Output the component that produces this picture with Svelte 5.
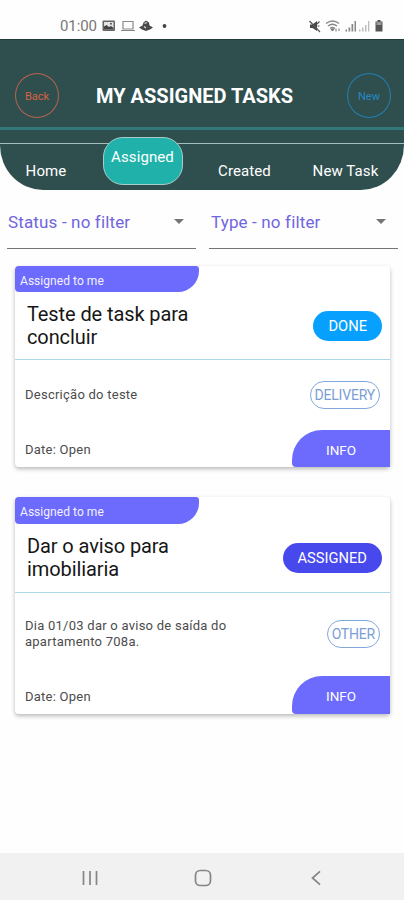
<script>
    const tabs = ['Home', 'Assigned', 'Created', 'New Task']
    const filters = ['Status - no filter', 'Type - no filter']
    const tasks = [
        {
            title: 'Teste de task para concluir',
            description: 'Descrição do teste',
            status: 'DONE',
            type: 'DELIVERY',
            date: 'Open'
        },
        {
            title: 'Dar o aviso para imobiliaria',
            description: 'Dia 01/03 dar o aviso de saída do apartamento 708a.',
            status: 'ASSIGNED',
            type: 'OTHER',
            date: 'Open'
        }
    ]
    let active = 'Assigned'
</script>

<div class="screen">
    <div class="status-bar">
        <span class="clock">01:00</span>
        <svg class="left-icons" width="66" height="14" viewBox="0 0 66 14">
            <rect x="0.5" y="1.500" width="12.500" height="10.500" rx="1" fill="#666" />
            <rect x="2" y="3" width="9.500" height="7.500" fill="#e4e4e4" />
            <path d="M2 10.5V7.500l2.500-1.500 2.500 2 2-1 2.500 2v1.500z" fill="#444" />
            <circle cx="9" cy="4.800" r="1" fill="#555" />
            <path d="M21 2.500h10v7.500h-10zM19 11.500h14" fill="none" stroke="#888" stroke-width="1.200" />
            <path d="M37 8.500l3.500-2 1-3 2.500-2 3 2 .5 3 3.500 2-3 2-4 1.500-4-1.500z" fill="#484848" />
            <path d="M42.500 4.500l2.500-1M42 7.500l2 1.500" stroke="#ddd" stroke-width="1.200" />
            <circle cx="62.500" cy="7" r="1.900" fill="#444" />
        </svg>
        <svg class="right-icons" width="78" height="14" viewBox="0 0 78 14">
            <path d="M2 5.500h2.500L9 2v10L4.500 9H2z" fill="#484848" />
            <path d="M1.500 2l10.500 11M9 5l2.500-2.500M9.500 7h2" stroke="#555" stroke-width="1.200" />
            <g fill="none" stroke="#888" stroke-width="1.400">
                <path d="M18 4.500q6.500-5 13 0" />
                <path d="M20 7q4.500-3.500 9 0" />
                <path d="M22 9.500q2.500-2 5 0" />
            </g>
            <path d="M23 10h3l-1.500 2zM28 9.500v3M31 9.500v2.500" fill="#666" stroke="#777" />
            <g fill="#888">
                <rect x="37.500" y="10.500" width="1.500" height="2" />
                <rect x="40.500" y="8.500" width="1.700" height="4" />
                <rect x="43.500" y="5" width="1.700" height="7.500" />
                <rect x="46.500" y="2" width="1.500" height="10.500" />
            </g>
            <g fill="#bbb">
                <rect x="51" y="10.500" width="1.500" height="2" />
                <rect x="54" y="8.500" width="1.500" height="4" />
                <rect x="57" y="6" width="1.500" height="6.500" />
                <rect x="60" y="2" width="1.300" height="10.500" />
            </g>
            <path d="M67.500 2.500h2V1h3v1.500h2v10h-7z" fill="#555" />
            <path d="M68.500 3h5v3h-5z" fill="#999" />
        </svg>
    </div>

    <header>
        <button class="round back">Back</button>
        <h1>MY ASSIGNED TASKS</h1>
        <button class="round new">New</button>
    </header>
    <div class="strip"></div>

    <nav>
        {#each tabs as tab}
            <button class="tab" class:active={tab === active} on:click={() => active = tab}>{tab}</button>
        {/each}
    </nav>

    <div class="filters">
        {#each filters as filter}
            <div class="filter">
                <span>{filter}</span>
                <svg width="10" height="5" viewBox="0 0 10 5"><path d="M0 0h10L5 5z" fill="#757575" /></svg>
            </div>
        {/each}
    </div>

    <main>
        {#each tasks as task}
            <article class={task.status.toLowerCase()}>
                <div class="label">Assigned to me</div>
                <div class="top">
                    <h2>{task.title}</h2>
                    <span class="badge">{task.status}</span>
                </div>
                <div class="body">
                    <p>{task.description}</p>
                    <span class="type">{task.type}</span>
                </div>
                <div class="bottom">
                    <span class="date">Date: {task.date}</span>
                    <button class="info">INFO</button>
                </div>
            </article>
        {/each}
    </main>

    <footer>
        <svg width="16" height="16" viewBox="0 0 16 16">
            <path d="M1.500 1v14M8 1v14M14.500 1v14" stroke="#858585" stroke-width="1.700" />
        </svg>
        <svg class="home" width="18" height="18" viewBox="0 0 18 18">
            <rect x="1.500" y="1.500" width="15" height="15" rx="4.800" fill="none" stroke="#858585" stroke-width="1.700" />
        </svg>
        <svg width="10" height="16" viewBox="0 0 10 16">
            <path d="M9 1.300L1.500 8 9 14.700" fill="none" stroke="#858585" stroke-width="1.700" />
        </svg>
    </footer>
</div>

<style>
    :global(body) {
        margin: 0;
        background: #fefefe;
    }

    .screen {
        display: flex;
        flex-direction: column;
        width: 404px;
        height: 900px;
        overflow: hidden;
        background: #fefefe;
        font-family: Roboto, "Liberation Sans", sans-serif;
    }

    button {
        padding: 0;
        border: none;
        background: none;
        font-family: inherit;
    }

    h1, h2, p {
        margin: 0;
        font-weight: 400;
    }

    .status-bar {
        display: flex;
        align-items: center;
        box-sizing: border-box;
        height: 39px;
        padding: 13px 18px 0 60px;
    }

    .clock {
        width: 42px;
        color: #777;
        font-size: 15px;
        letter-spacing: -0.1px;
    }

    .right-icons {
        margin-left: auto;
    }

    header {
        display: flex;
        align-items: center;
        box-sizing: border-box;
        height: 88px;
        padding: 24px 13px 0 15px;
        border-top: 1px solid #203c3b;
        background: #2f4f4f;
    }

    h1 {
        margin-left: 37px;
        color: #fff;
        font-size: 20px;
        font-weight: 700;
        white-space: nowrap;
    }

    .round {
        box-sizing: border-box;
        width: 44px;
        height: 45px;
        padding-top: 2px;
        border: 1.5px solid;
        border-radius: 50%;
        font-size: 11px;
    }

    .back {
        border-color: #b7634f;
        color: #d5613f;
    }

    .new {
        margin-left: auto;
        border-color: #247fb0;
        color: #2389c5;
    }

    .strip {
        height: 13px;
        border-top: 3px solid #32777a;
        background: #2f4f4f;
    }

    nav {
        display: grid;
        grid-template-columns: 92px 101px 103px 99px;
        box-sizing: border-box;
        height: 47px;
        flex-shrink: 0;
        border-top: 1px solid #a5bdbb;
        border-radius: 0 0 43px 43px / 0 0 45px 45px;
        background: #2f4f4f;
    }

    .tab {
        padding-top: 7px;
        color: #fff;
        font-size: 15px;
        letter-spacing: 0.1px;
        white-space: nowrap;
    }

    .tab.active {
        box-sizing: border-box;
        justify-self: center;
        width: 80px;
        height: 48px;
        margin-top: -7px;
        padding: 0 0 9px;
        border: 1px solid #a7cdca;
        border-radius: 20px;
        background: #20b2aa;
    }

    .filters {
        display: grid;
        grid-template-columns: 189px 189px;
        gap: 13px;
        height: 59px;
        padding-left: 7px;
    }

    .filter {
        display: flex;
        align-items: center;
        justify-content: space-between;
        box-sizing: border-box;
        padding: 5px 12px 0 1px;
        border-bottom: 1px solid #757575;
        color: #7065df;
        font-size: 17px;
        letter-spacing: 0.15px;
    }

    .filter + .filter {
        padding-left: 2px;
    }

    main {
        flex: 1;
        padding: 17px 14px 0 15px;
    }

    article {
        display: grid;
        grid-template-rows: 26px 68px 1fr 37px;
        height: 201px;
        margin-bottom: 30px;
        border-radius: 4px;
        background: #fff;
        box-shadow: 0 2px 4px rgba(0, 0, 0, 0.28);
    }

    article.assigned {
        grid-template-rows: 27px 69px 1fr 38px;
        height: 217px;
    }

    .label {
        display: flex;
        align-items: center;
        box-sizing: border-box;
        width: 184px;
        padding: 3px 0 0 5px;
        border-radius: 4px 3px 21px 4px;
        background: #6c6bfd;
        color: #f3f2ff;
        font-size: 12px;
        letter-spacing: 0.05px;
    }

    .top {
        display: flex;
        justify-content: space-between;
        align-items: center;
        box-sizing: border-box;
        padding: 0 8px 0 12px;
        border-bottom: 1px solid #a9d9e5;
    }

    h2 {
        width: 180px;
        color: #161616;
        font-size: 20px;
        letter-spacing: -0.1px;
        line-height: 23px;
    }

    .badge {
        padding: 0 15px;
        border-radius: 15px;
        background: #08a0ff;
        color: #fff;
        font-size: 14.7px;
        line-height: 30px;
    }

    .assigned .badge {
        background: #4849ed;
    }

    .body {
        display: flex;
        justify-content: space-between;
        align-items: center;
        padding: 0 10px 1px;
    }

    p, .date {
        color: #4c4c4c;
        font-size: 13px;
        letter-spacing: 0.25px;
        line-height: 16px;
    }

    p {
        width: 225px;
    }

    .type {
        padding: 0 4px;
        border: 1px solid #82a8dc;
        border-radius: 14px;
        color: #7b9ed5;
        font-size: 14px;
        letter-spacing: -0.2px;
        line-height: 26px;
    }

    .bottom {
        display: flex;
        justify-content: space-between;
        align-items: center;
        padding-left: 10px;
    }

    .date {
        padding-top: 3px;
    }

    .info {
        width: 98px;
        height: 100%;
        padding-top: 2px;
        border-radius: 30px 0 0 4px;
        background: #6c6bfd;
        color: #fff;
        font-size: 13.5px;
    }

    footer {
        display: flex;
        align-items: center;
        justify-content: space-between;
        box-sizing: border-box;
        height: 47px;
        padding: 2px 83px 0 82px;
        background: #f1f1f1;
    }

    .home {
        margin-right: 4px;
    }
</style>
